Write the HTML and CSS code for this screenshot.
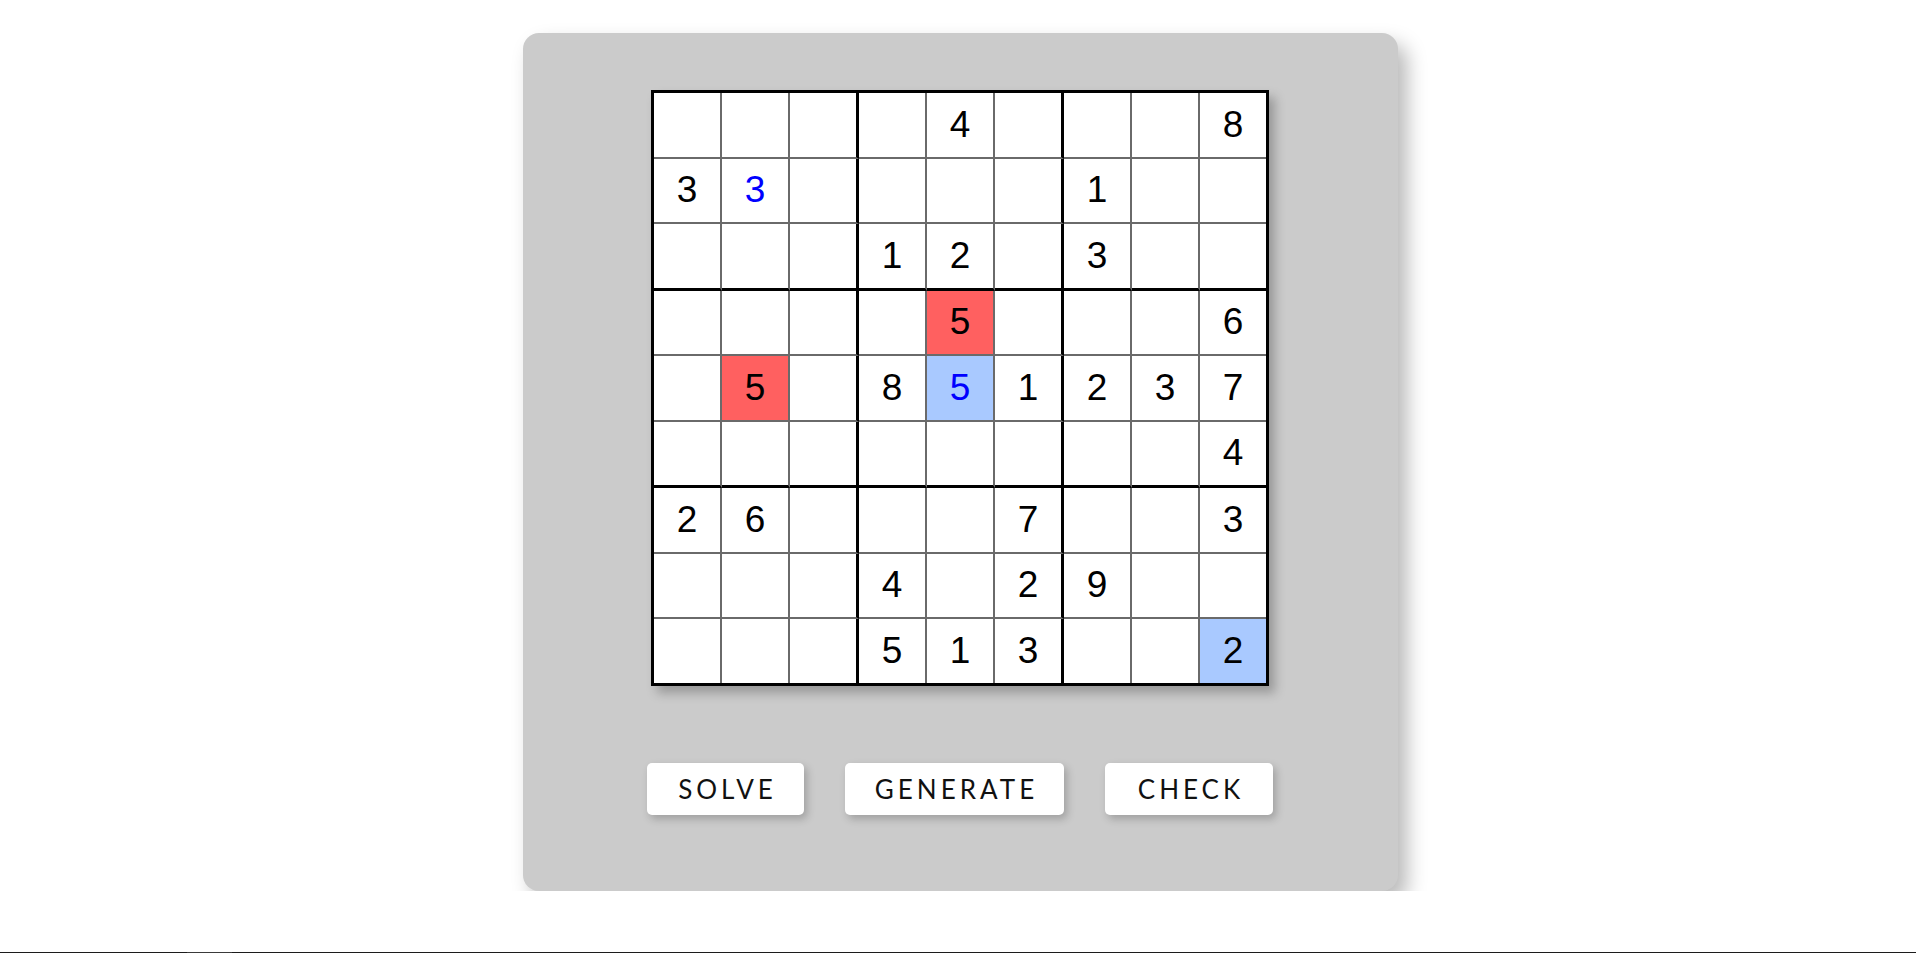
FILE: index.html
```html
<!DOCTYPE html>
<html>
<head>
<meta charset="utf-8">
<title>Sudoku</title>
<link rel="stylesheet" href="styles.css">
</head>
<body>
<main class="page">
  <section class="panel">
    <div class="board">
      <div class="cell"></div><div class="cell"></div><div class="cell"></div><div class="cell"></div><div class="cell">4</div><div class="cell"></div><div class="cell"></div><div class="cell"></div><div class="cell">8</div>
      <div class="cell">3</div><div class="cell user">3</div><div class="cell"></div><div class="cell"></div><div class="cell"></div><div class="cell"></div><div class="cell">1</div><div class="cell"></div><div class="cell"></div>
      <div class="cell"></div><div class="cell"></div><div class="cell"></div><div class="cell">1</div><div class="cell">2</div><div class="cell"></div><div class="cell">3</div><div class="cell"></div><div class="cell"></div>
      <div class="cell"></div><div class="cell"></div><div class="cell"></div><div class="cell"></div><div class="cell conflict">5</div><div class="cell"></div><div class="cell"></div><div class="cell"></div><div class="cell">6</div>
      <div class="cell"></div><div class="cell conflict">5</div><div class="cell"></div><div class="cell">8</div><div class="cell user selected">5</div><div class="cell">1</div><div class="cell">2</div><div class="cell">3</div><div class="cell">7</div>
      <div class="cell"></div><div class="cell"></div><div class="cell"></div><div class="cell"></div><div class="cell"></div><div class="cell"></div><div class="cell"></div><div class="cell"></div><div class="cell">4</div>
      <div class="cell">2</div><div class="cell">6</div><div class="cell"></div><div class="cell"></div><div class="cell"></div><div class="cell">7</div><div class="cell"></div><div class="cell"></div><div class="cell">3</div>
      <div class="cell"></div><div class="cell"></div><div class="cell"></div><div class="cell">4</div><div class="cell"></div><div class="cell">2</div><div class="cell">9</div><div class="cell"></div><div class="cell"></div>
      <div class="cell"></div><div class="cell"></div><div class="cell"></div><div class="cell">5</div><div class="cell">1</div><div class="cell">3</div><div class="cell"></div><div class="cell"></div><div class="cell selected">2</div>
    </div>
    <div class="actions">
      <button class="btn btn-solve">SOLVE</button>
      <button class="btn btn-generate">GENERATE</button>
      <button class="btn btn-check">CHECK</button>
    </div>
  </section>
</main>
<div class="taskbar-edge"><span class="taskbar-thumb"></span></div>
</body>
</html>
```
FILE: styles.css
```css
html, body {
  margin: 0;
  padding: 0;
  background: #ffffff;
}

.page {
  display: flex;
  justify-content: center;
  padding-top: 33px;
  padding-left: 4px;
}

.panel {
  width: 875px;
  height: 858px;
  box-sizing: border-box;
  background: #cbcbcb;
  border-radius: 16px;
  box-shadow: 9px 11px 20px rgba(0, 0, 0, 0.28);
  display: flex;
  flex-direction: column;
  align-items: center;
  padding-top: 57px;
}

.board {
  display: grid;
  grid-template-columns: repeat(9, auto);
  border: 3px solid #000;
  background: #fff;
  box-shadow: 6px 7px 10px rgba(0, 0, 0, 0.25);
}

.cell {
  width: 66px;
  height: 63.5px;
  border-right: 2px solid #6a6a6a;
  border-bottom: 2px solid #6a6a6a;
  display: flex;
  align-items: center;
  justify-content: center;
  font-family: "Liberation Sans", Arial, sans-serif;
  font-size: 37px;
  color: #000;
  background: #fff;
}

.cell:nth-child(9n+3),
.cell:nth-child(9n+6) {
  border-right: 3px solid #000;
}

.cell:nth-child(9n) {
  border-right: none;
}

.cell:nth-child(n+19):nth-child(-n+27),
.cell:nth-child(n+46):nth-child(-n+54) {
  border-bottom: 3px solid #000;
}

.cell:nth-child(n+73) {
  border-bottom: none;
}

.cell.user {
  color: #0000ff;
}

.cell.conflict {
  background: #ff6060;
}

.cell.selected {
  background: #a9c9ff;
}

.actions {
  display: flex;
  gap: 41px;
  margin-top: 77px;
}

.btn {
  height: 52px;
  border: none;
  border-radius: 5px;
  background: #fff;
  box-shadow: 3px 4px 8px rgba(0, 0, 0, 0.22);
  font-family: "Lato", "Open Sans", sans-serif;
  font-weight: 400;
  font-size: 26px;
  letter-spacing: 4px;
  color: #111;
  padding: 0 0 0 4px;
}

.btn-solve { width: 157px; }
.btn-generate { width: 219px; }
.btn-check { width: 168px; }

.taskbar-edge {
  position: fixed;
  left: 0;
  right: 0;
  bottom: 0;
  height: 1px;
  background: #1c1c1c;
}

.taskbar-thumb {
  position: absolute;
  left: 187px;
  width: 45px;
  top: 0;
  height: 1px;
  background: #3a3a3a;
}
```
